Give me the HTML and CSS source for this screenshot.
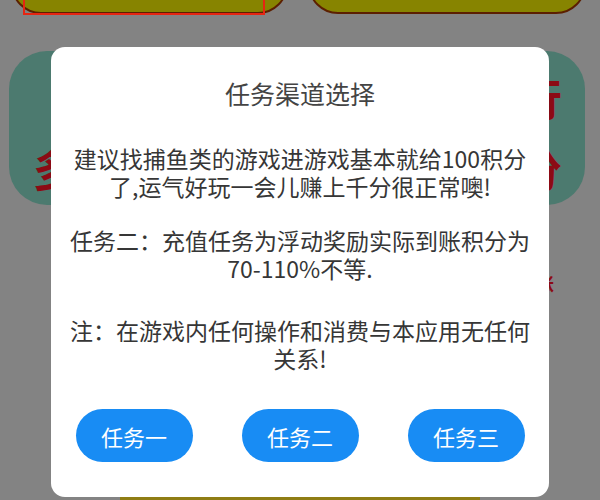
FILE: index.html
```html
<!DOCTYPE html>
<html lang="zh-CN">
<head>
<meta charset="utf-8">
<title>任务渠道选择</title>
<link rel="stylesheet" href="styles.css">
</head>
<body>
<div class="page">
  <div class="top-row">
    <div class="pill pill-left"><div class="focus-box"></div></div>
    <div class="pill pill-right"></div>
  </div>
  <div class="banner">
    <div class="banner-line line-one"><span>行</span></div>
    <div class="banner-line line-two"><span>多</span><span>分</span></div>
  </div>
  <div class="red-note"><span>账</span></div>
  <div class="bottom-bar"></div>
</div>

<div class="overlay">
  <div class="dialog">
    <div class="dialog-title">任务渠道选择</div>
    <p class="msg msg-first">建议找捕鱼类的游戏进游戏基本就给100积分了,运气好玩一会儿赚上千分很正常噢!</p>
    <p class="msg msg-second">任务二：充值任务为浮动奖励实际到账积分为70-110%不等.</p>
    <p class="msg msg-third">注：在游戏内任何操作和消费与本应用无任何关系!</p>
    <div class="btn-row">
      <button class="task-btn">任务一</button>
      <button class="task-btn">任务二</button>
      <button class="task-btn">任务三</button>
    </div>
  </div>
</div>
</body>
</html>
```

FILE: styles.css
```css
html, body {
  margin: 0;
  padding: 0;
  width: 600px;
  height: 500px;
  overflow: hidden;
  background: #838383;
  font-family: "Noto Sans CJK SC", "Noto Sans", sans-serif;
}

.page {
  width: 600px;
  height: 500px;
  overflow: hidden;
}

.top-row {
  display: flex;
  margin-top: -46px;
  height: 60px;
}

.pill {
  box-sizing: border-box;
  height: 60px;
  border-radius: 30px;
  background: #878400;
  border: 2px solid #5c1f00;
}

.pill-left {
  width: 277px;
  margin-left: 11px;
  display: flex;
  align-items: flex-end;
  padding-left: 10px;
}

.focus-box {
  box-sizing: border-box;
  width: 242px;
  height: 64px;
  margin-bottom: -3px;
  border: 2px solid #e62512;
  flex: none;
}

.pill-right {
  width: 278px;
  margin-left: 20px;
}

.banner {
  box-sizing: border-box;
  width: 576px;
  height: 154px;
  margin: 37px 0 0 9px;
  border-radius: 38px;
  background: #4c7a6f;
  padding: 16px 23px 0 24px;
  color: #8c0a14;
  font-weight: bold;
  font-size: 44px;
}

.banner-line {
  display: flex;
  white-space: nowrap;
}

.line-one {
  justify-content: flex-end;
  line-height: 60px;
}

.line-two {
  justify-content: space-between;
  line-height: 82px;
}

.red-note {
  display: flex;
  justify-content: flex-end;
  margin-top: 68px;
  padding-right: 46px;
  color: #8c0a14;
  font-size: 18px;
  line-height: 20px;
  font-weight: bold;
}

.bottom-bar {
  width: 360px;
  height: 6px;
  margin: 202px 0 0 120px;
  background: #8f7d14;
}

.overlay {
  position: fixed;
  left: 0;
  top: 0;
  width: 600px;
  height: 500px;
  display: flex;
  justify-content: center;
  align-items: flex-start;
}

.dialog {
  box-sizing: border-box;
  width: 498px;
  height: 450px;
  margin-top: 47px;
  background: #ffffff;
  border-radius: 14px;
  padding: 28px 16px 0;
  display: flex;
  flex-direction: column;
}

.dialog-title {
  font-size: 25px;
  line-height: 36px;
  text-align: center;
  color: #444444;
}

.msg {
  margin: 0;
  font-size: 23px;
  line-height: 28px;
  text-align: center;
  color: #363636;
}

.msg-first {
  margin-top: 33px;
}

.msg-second {
  margin-top: 26px;
}

.msg-third {
  margin-top: 34px;
}

.btn-row {
  display: flex;
  justify-content: center;
  gap: 49px;
  margin-top: 37px;
}

.task-btn {
  width: 117px;
  height: 53px;
  border: none;
  border-radius: 27px;
  background: #188cf4;
  color: #ffffff;
  font-family: "Noto Sans CJK SC", "Noto Sans", sans-serif;
  font-size: 22px;
  padding: 0;
}
```
